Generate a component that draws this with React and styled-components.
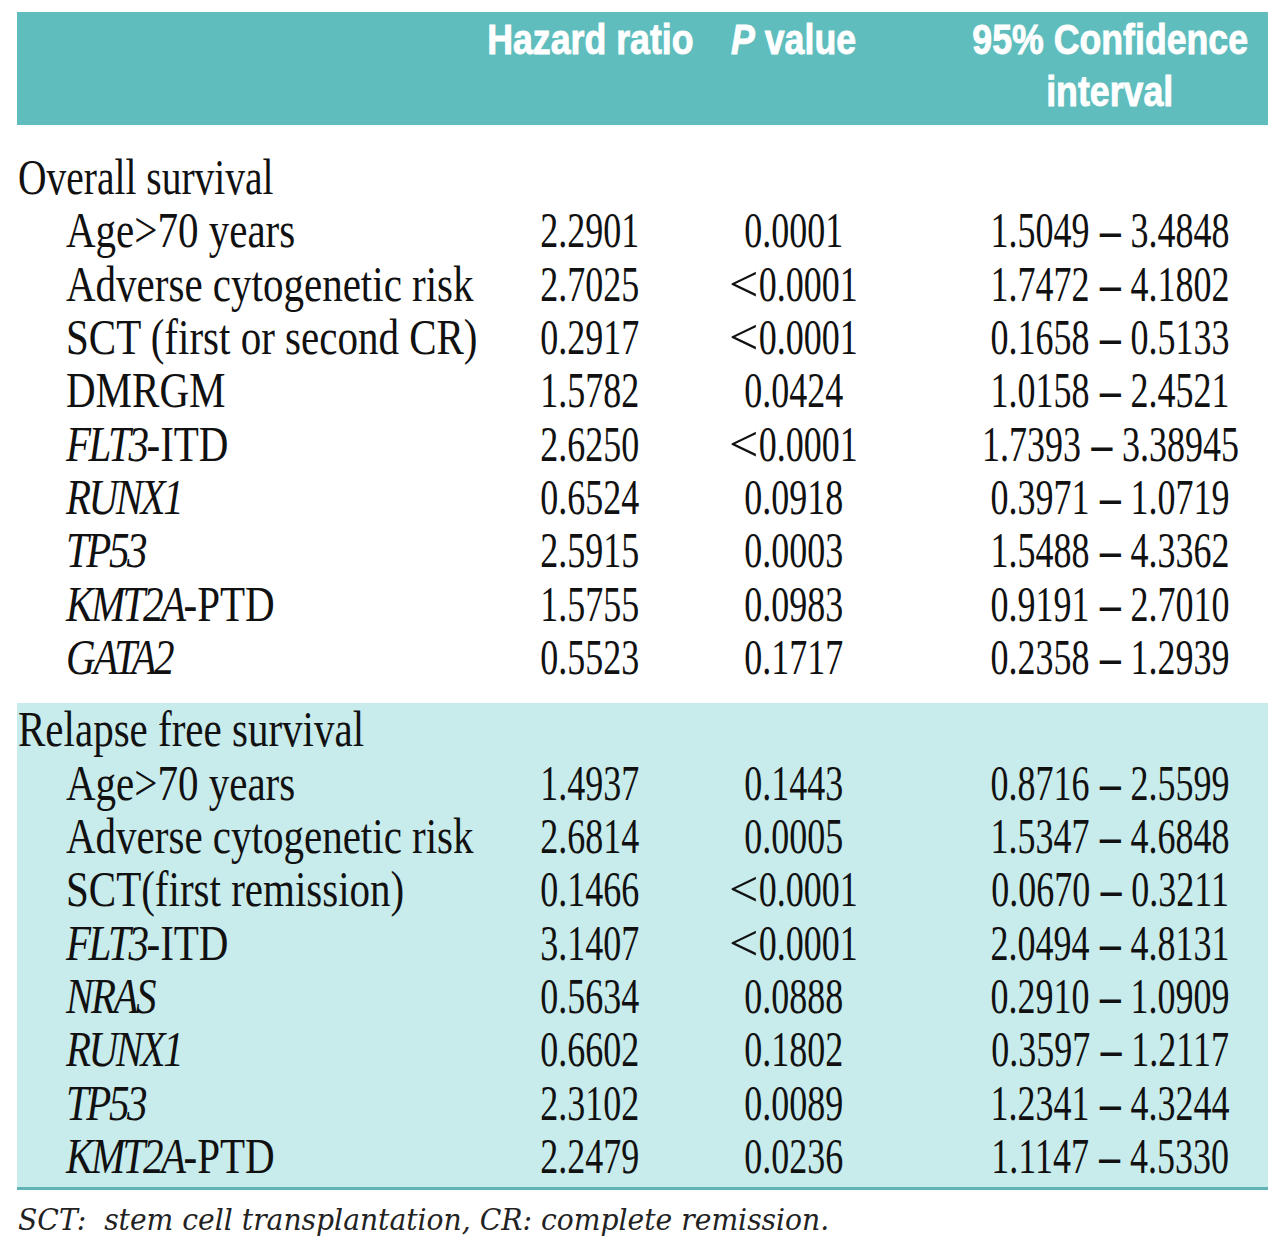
import React from 'react'
import styled, { createGlobalStyle } from 'styled-components'

const GlobalStyle = createGlobalStyle`
  html, body {
    margin: 0;
    padding: 0;
    background: #ffffff;
  }
`

const Page = styled.div`
  width: 1280px;
  height: 1245px;
  box-sizing: border-box;
  padding: 12px 12px 0 17px;
  background: #ffffff;
`

const COLS = '473px 200px 208px 370px'

const Header = styled.div`
  display: grid;
  grid-template-columns: ${COLS};
  height: 113px;
  box-sizing: border-box;
  padding-top: 2px;
  background: #5fbdbd;
  color: #ffffff;
  font-family: 'Liberation Sans', Arial, sans-serif;
  font-weight: 700;
  font-size: 42px;
  line-height: 52px;
  -webkit-text-stroke: 0.9px #ffffff;
`

const HeadCell = styled.div`
  display: flex;
  flex-direction: column;
  align-items: center;
  padding-left: ${p => p.$pad || 0}px;
`

const Squeeze = styled.span`
  display: inline-block;
  white-space: nowrap;
  transform: scaleX(${p => p.$sx || 0.85});
  transform-origin: ${p => (p.$left ? 'left center' : 'center center')};
`

const Section = styled.div`
  padding: ${p => (p.$shaded ? '0 0 4px' : '26px 0 19px')};
  background: ${p => (p.$shaded ? '#c8ebeb' : 'transparent')};
  border-bottom: ${p => (p.$shaded ? '3px solid #62b3b6' : 'none')};
`

const Row = styled.div`
  display: grid;
  grid-template-columns: ${COLS};
  height: 53.33px;
  font-family: 'Liberation Serif', 'Times New Roman', serif;
  font-size: 50px;
  line-height: 53.33px;
  color: #111111;
`

const Label = styled.div`
  padding-left: ${p => (p.$title ? 1 : 49)}px;
  white-space: nowrap;
`

const Num = styled.div`
  display: flex;
  justify-content: center;
  padding-left: ${p => p.$pad || 0}px;
  white-space: nowrap;
`

const Lt = styled.span`
  display: inline-block;
  transform: scaleX(1.45);
  margin: 0 7px 0 5px;
`

const Dash = styled.span`
  display: inline-block;
  margin: 0 16px;
  font-weight: 700;
  transform: scaleX(1.15);
`

const Gene = styled.i`
  font-style: italic;
  letter-spacing: -3px;
`

const Footnote = styled.div`
  padding: 10px 0 0 1px;
  font-family: 'DejaVu Serif', 'Liberation Serif', serif;
  font-style: italic;
  font-size: 30px;
  line-height: 40px;
  color: #222222;
`

const overall = [
  ['Age>70 years', '2.2901', '0.0001', ['1.5049', '3.4848']],
  ['Adverse cytogenetic risk', '2.7025', '<0.0001', ['1.7472', '4.1802']],
  ['SCT (first or second CR)', '0.2917', '<0.0001', ['0.1658', '0.5133']],
  ['DMRGM', '1.5782', '0.0424', ['1.0158', '2.4521']],
  [['FLT3', '-ITD'], '2.6250', '<0.0001', ['1.7393', '3.38945']],
  [['RUNX1', ''], '0.6524', '0.0918', ['0.3971', '1.0719']],
  [['TP53', ''], '2.5915', '0.0003', ['1.5488', '4.3362']],
  [['KMT2A', '-PTD'], '1.5755', '0.0983', ['0.9191', '2.7010']],
  [['GATA2', ''], '0.5523', '0.1717', ['0.2358', '1.2939']],
]

const relapse = [
  ['Age>70 years', '1.4937', '0.1443', ['0.8716', '2.5599']],
  ['Adverse cytogenetic risk', '2.6814', '0.0005', ['1.5347', '4.6848']],
  ['SCT(first remission)', '0.1466', '<0.0001', ['0.0670', '0.3211']],
  [['FLT3', '-ITD'], '3.1407', '<0.0001', ['2.0494', '4.8131']],
  [['NRAS', ''], '0.5634', '0.0888', ['0.2910', '1.0909']],
  [['RUNX1', ''], '0.6602', '0.1802', ['0.3597', '1.2117']],
  [['TP53', ''], '2.3102', '0.0089', ['1.2341', '4.3244']],
  [['KMT2A', '-PTD'], '2.2479', '0.0236', ['1.1147', '4.5330']],
]

function PValue({ value }) {
  if (value.startsWith('<')) {
    return (
      <>
        <Lt>&lt;</Lt>
        {value.slice(1)}
      </>
    )
  }
  return value
}

function DataRow({ row }) {
  const [label, hr, p, ci] = row
  return (
    <Row>
      <Label>
        <Squeeze $left $sx={0.82}>
          {Array.isArray(label) ? (
            <>
              <Gene>{label[0]}</Gene>
              {label[1]}
            </>
          ) : (
            label
          )}
        </Squeeze>
      </Label>
      <Num><Squeeze $sx={0.72}>{hr}</Squeeze></Num>
      <Num><Squeeze $sx={0.72}><PValue value={p} /></Squeeze></Num>
      <Num $pad={54}>
        <Squeeze $sx={0.72}>
          {ci[0]}
          <Dash>–</Dash>
          {ci[1]}
        </Squeeze>
      </Num>
    </Row>
  )
}

function Title({ children, sx }) {
  return (
    <Row>
      <Label $title>
        <Squeeze $left $sx={sx}>{children}</Squeeze>
      </Label>
    </Row>
  )
}

export default function App() {
  return (
    <Page>
      <GlobalStyle />
      <Header>
        <HeadCell />
        <HeadCell><Squeeze>Hazard ratio</Squeeze></HeadCell>
        <HeadCell><Squeeze><i>P</i> value</Squeeze></HeadCell>
        <HeadCell $pad={54}>
          <Squeeze>95% Confidence</Squeeze>
          <Squeeze>interval</Squeeze>
        </HeadCell>
      </Header>

      <Section>
        <Title sx={0.79}>Overall survival</Title>
        {overall.map((r, i) => <DataRow key={i} row={r} />)}
      </Section>

      <Section $shaded>
        <Title sx={0.82}>Relapse free survival</Title>
        {relapse.map((r, i) => <DataRow key={i} row={r} />)}
      </Section>

      <Footnote>
        <Squeeze $left $sx={0.94}>SCT:&nbsp; stem cell transplantation, CR: complete remission.</Squeeze>
      </Footnote>
    </Page>
  )
}
